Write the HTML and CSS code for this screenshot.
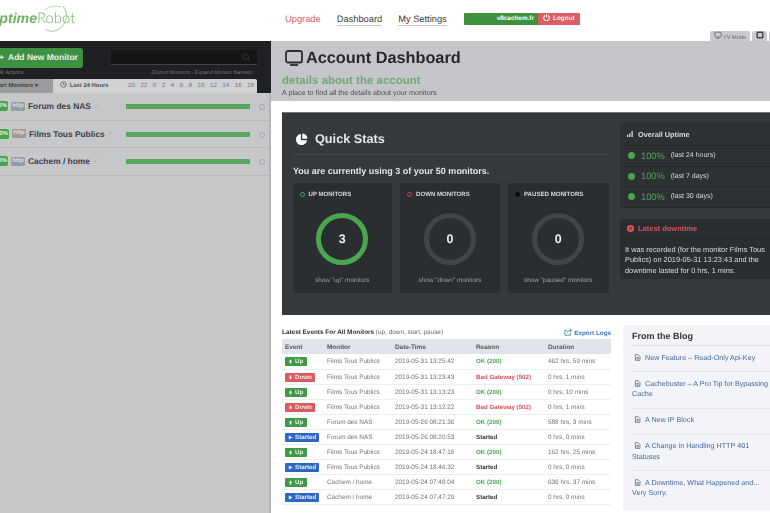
FILE: index.html
```html
<!DOCTYPE html>
<html lang="en">
<head>
<meta charset="utf-8">
<title>Account Dashboard</title>
<link rel="stylesheet" href="styles.css">
</head>
<body>
<svg class="sprite" width="0" height="0"><symbol id="doc" viewBox="0 0 10 10"><path d="M2 1 H6 L8.5 3.5 V9 H2 Z M3.5 5 H7 M3.5 7 H7" fill="none" stroke="#555" stroke-width="1"/></symbol></svg>
<div class="page">
  <header class="top">
    <div class="logo">
      <span class="logo-bold">Uptime</span><span class="logo-thin">Robot</span>
      <svg class="logo-orbit" width="30" height="30" viewBox="0 0 30 30"><path d="M23 2 C29 9 27 20 19 25 C14 28 9 28 5 25" fill="none" stroke="#7dbb72" stroke-width="0.8"/><path d="M5 6 C9 2 15 1 21 3" fill="none" stroke="#9ccb94" stroke-width="0.7"/></svg>
    </div>
    <nav class="nav">
      <a class="nav-upgrade">Upgrade</a>
      <a class="nav-link">Dashboard</a>
      <a class="nav-link">My Settings</a>
    </nav>
    <div class="userbox">
      <span class="user-name">v8cachem.fr</span>
      <span class="user-logout">
        <svg width="7" height="7" viewBox="0 0 10 10"><path d="M3 2.2 A4 4 0 1 0 7 2.2 M5 0.5 V5" fill="none" stroke="#fff" stroke-width="1.5"/></svg>
        Logout
      </span>
    </div>
    <div class="tabs-top">
      <span class="tv-tab">
        <svg width="8" height="8" viewBox="0 0 10 10"><rect x="1" y="1.5" width="8" height="6" rx="1" fill="none" stroke="#666" stroke-width="1"/><path d="M3 9 H7" stroke="#666"/></svg>
        TV Mode
      </span>
      <span class="tv-tab tv-icon"><svg width="8" height="8" viewBox="0 0 10 10"><rect x="1.5" y="1.5" width="7" height="7" rx="1" fill="none" stroke="#444" stroke-width="1.8"/></svg></span>
      <span class="tv-tab tv-icon"></span>
    </div>
  </header>

  <div class="columns">
    <aside class="side">
      <div class="side-dark">
        <div class="side-actions">
          <div class="side-left">
            <a class="add-btn"><span class="add-plus">+</span> Add New Monitor</a>
            <span class="bulk">Bulk Actions</span>
          </div>
          <div class="side-right">
            <div class="search">
              <svg width="9" height="9" viewBox="0 0 10 10"><circle cx="4.2" cy="4.2" r="3" fill="none" stroke="#333" stroke-width="1.2"/><path d="M6.5 6.5 L9.3 9.3" stroke="#333" stroke-width="1.2"/></svg>
            </div>
            <span class="export">(Export Monitors - Expand Monitor Names)</span>
          </div>
        </div>
        <div class="side-tabs">
          <span class="sort">Sort Monitors &#9662;</span>
          <span class="last24">
            <svg width="7" height="7" viewBox="0 0 10 10"><circle cx="5" cy="5" r="4" fill="none" stroke="#555" stroke-width="1.1"/><path d="M5 2.5 V5 H7" fill="none" stroke="#555" stroke-width="1"/></svg>
            Last 24 Hours
          </span>
          <span class="hours"><i>20</i><i>22</i><i>0</i><i>2</i><i>4</i><i>6</i><i>8</i><i>10</i><i>12</i><i>14</i><i>16</i><i>18</i></span>
        </div>
      </div>
      <div class="mon-row">
        <span class="pct">100%</span><span class="http">http</span><span class="mon-name">Forum des NAS</span><span class="check">&#10003;</span>
        <span class="bar"></span><span class="dot"></span>
      </div>
      <div class="mon-row mon-shift">
        <span class="pct">100%</span><span class="http">http</span><span class="mon-name">Films Tous Publics</span><span class="check">&#10003;</span>
        <span class="bar"></span><span class="dot"></span>
      </div>
      <div class="mon-row">
        <span class="pct">100%</span><span class="http">http</span><span class="mon-name">Cachem / home</span><span class="check">&#10003;</span>
        <span class="bar"></span><span class="dot"></span>
      </div>
    </aside>

    <main class="main">
      <section class="head">
        <h1 class="title">
          <svg width="18" height="18" viewBox="0 0 18 18"><rect x="1" y="2" width="16" height="11.5" rx="2" fill="none" stroke="#2b2d30" stroke-width="1.8"/><path d="M5 16 H13" stroke="#2b2d30" stroke-width="1.8"/></svg>
          Account Dashboard
        </h1>
        <p class="sub">details about the account</p>
        <p class="desc">A place to find all the details about your monitors</p>
      </section>

      <section class="stats">
        <div class="stats-left">
          <h2 class="stats-title">
            <svg width="13" height="13" viewBox="0 0 14 14"><path d="M6.3 1 A6 6 0 1 0 13 7.7 H6.3 Z" fill="#fff"/><path d="M7.8 0.6 A6 6 0 0 1 13.4 6.2 H7.8 Z" fill="#fff"/></svg>
            Quick Stats
          </h2>
          <p class="using">You are currently using 3 of your 50 monitors.</p>
          <div class="boxes">
            <div class="box">
              <div class="box-head"><span class="ind ind-up"></span>UP MONITORS</div>
              <div class="ring ring-up">3</div>
              <div class="box-foot">show "up" monitors</div>
            </div>
            <div class="box">
              <div class="box-head"><span class="ind ind-down"></span>DOWN MONITORS</div>
              <div class="ring">0</div>
              <div class="box-foot">show "down" monitors</div>
            </div>
            <div class="box">
              <div class="box-head"><span class="ind ind-paused"></span>PAUSED MONITORS</div>
              <div class="ring">0</div>
              <div class="box-foot">show "paused" monitors</div>
            </div>
          </div>
        </div>
        <div class="stats-right">
          <div class="uptime">
            <div class="up-head">
              <svg width="6" height="6" viewBox="0 0 8 8"><path d="M0 5h1.6v3H0zM3 3h1.6v5H3zM6 0h1.6v8H6z" fill="#e8e8e8"/></svg>
              Overall Uptime
            </div>
            <div class="up-row"><span class="up-dot"></span><span class="up-val">100%</span><span class="up-lab">(last 24 hours)</span></div>
            <div class="up-row"><span class="up-dot"></span><span class="up-val">100%</span><span class="up-lab">(last 7 days)</span></div>
            <div class="up-row"><span class="up-dot"></span><span class="up-val">100%</span><span class="up-lab">(last 30 days)</span></div>
          </div>
          <div class="latest">
            <div class="latest-head">
              <svg width="7" height="7" viewBox="0 0 10 10"><circle cx="5" cy="5" r="5" fill="#d9595f"/><path d="M3 3 L7 7 M7 3 L3 7" stroke="#2b2e31" stroke-width="1.4"/></svg>
              Latest downtime
            </div>
            <p class="latest-text">It was recorded (for the monitor Films Tous Publics) on 2019-05-31 13:23:43 and the downtime lasted for 0 hrs, 1 mins.</p>
          </div>
        </div>
      </section>

      <section class="lower">
        <div class="events">
          <div class="events-top">
            <span class="events-title"><b>Latest Events For All Monitors</b> (up, down, start, pause)</span>
            <a class="export-logs">
              <svg width="8" height="8" viewBox="0 0 10 10"><path d="M8 6 V9 H1 V3 H4 M4 6 C4 4 6 3 9 3 M7 1 L9.3 3 L7 5" fill="none" stroke="#3a78b8" stroke-width="1"/></svg>
              Export Logs
            </a>
          </div>
          <table class="log">
            <thead><tr><th class="c1">Event</th><th class="c2">Monitor</th><th class="c3">Date-Time</th><th class="c4">Reason</th><th>Duration</th></tr></thead>
            <tbody>
              <tr><td><span class="tag tag-up"><svg class="arr"><use href="#a-up"/></svg>Up</span></td><td>Films Tous Publics</td><td>2019-05-31 13:25:42</td><td class="ok">OK (200)</td><td>462 hrs, 59 mins</td></tr>
              <tr><td><span class="tag tag-down"><svg class="arr"><use href="#a-down"/></svg>Down</span></td><td>Films Tous Publics</td><td>2019-05-31 13:23:43</td><td class="bad">Bad Gateway (502)</td><td>0 hrs, 1 mins</td></tr>
              <tr><td><span class="tag tag-up"><svg class="arr"><use href="#a-up"/></svg>Up</span></td><td>Films Tous Publics</td><td>2019-05-31 13:13:23</td><td class="ok">OK (200)</td><td>0 hrs, 10 mins</td></tr>
              <tr><td><span class="tag tag-down"><svg class="arr"><use href="#a-down"/></svg>Down</span></td><td>Films Tous Publics</td><td>2019-05-31 13:12:22</td><td class="bad">Bad Gateway (502)</td><td>0 hrs, 1 mins</td></tr>
              <tr><td><span class="tag tag-up"><svg class="arr"><use href="#a-up"/></svg>Up</span></td><td>Forum des NAS</td><td>2019-05-26 08:21:36</td><td class="ok">OK (200)</td><td>588 hrs, 3 mins</td></tr>
              <tr><td><span class="tag tag-start"><svg class="arr"><use href="#a-play"/></svg>Started</span></td><td>Forum des NAS</td><td>2019-05-26 08:20:53</td><td class="st">Started</td><td>0 hrs, 0 mins</td></tr>
              <tr><td><span class="tag tag-up"><svg class="arr"><use href="#a-up"/></svg>Up</span></td><td>Films Tous Publics</td><td>2019-05-24 18:47:16</td><td class="ok">OK (200)</td><td>162 hrs, 25 mins</td></tr>
              <tr><td><span class="tag tag-start"><svg class="arr"><use href="#a-play"/></svg>Started</span></td><td>Films Tous Publics</td><td>2019-05-24 18:46:32</td><td class="st">Started</td><td>0 hrs, 0 mins</td></tr>
              <tr><td><span class="tag tag-up"><svg class="arr"><use href="#a-up"/></svg>Up</span></td><td>Cachem / home</td><td>2019-05-24 07:48:04</td><td class="ok">OK (200)</td><td>636 hrs, 37 mins</td></tr>
              <tr><td><span class="tag tag-start"><svg class="arr"><use href="#a-play"/></svg>Started</span></td><td>Cachem / home</td><td>2019-05-24 07:47:29</td><td class="st">Started</td><td>0 hrs, 0 mins</td></tr>
            </tbody>
          </table>
          <svg class="sprite" width="0" height="0">
            <symbol id="a-up" viewBox="0 0 6 6"><path d="M3 0.5 L5.2 3 H4 V5.5 H2 V3 H0.8 Z" fill="#e8f0e8"/></symbol>
            <symbol id="a-down" viewBox="0 0 6 6"><path d="M3 5.5 L5.2 3 H4 V0.5 H2 V3 H0.8 Z" fill="#f5e4e4"/></symbol>
            <symbol id="a-play" viewBox="0 0 6 6"><path d="M1 0.5 L5.5 3 L1 5.5 Z" fill="#e8eefa"/></symbol>
          </svg>
        </div>
        <div class="blog">
          <h3 class="blog-title">From the Blog</h3>
          <a class="post"><svg class="doc"><use href="#doc"/></svg>New Feature – Read-Only Api-Key</a>
          <a class="post"><svg class="doc"><use href="#doc"/></svg>Cachebuster – A Pro Tip for Bypassing Cache</a>
          <a class="post"><svg class="doc"><use href="#doc"/></svg>A New IP Block</a>
          <a class="post"><svg class="doc"><use href="#doc"/></svg>A Change in Handling HTTP 401 Statuses</a>
          <a class="post"><svg class="doc"><use href="#doc"/></svg>A Downtime, What Happened and... Very Sorry.</a>
        </div>
      </section>
    </main>
  </div>
</div>
</body>
</html>
```
FILE: styles.css
```css
html, body { margin: 0; padding: 0; background: #fff; }
body { font-family: "Liberation Sans", Arial, sans-serif; width: 770px; height: 513px; overflow: hidden; text-rendering: geometricPrecision; }
p, h1, h2, h3 { margin: 0; }
.sprite { position: absolute; }
.page { width: 770px; height: 513px; overflow: hidden; filter: blur(0.5px); }

.top { position: relative; height: 41px; display: flex; align-items: flex-start; background: #fff; }
.logo { position: relative; width: 296px; margin-left: -11px; padding-top: 6px; line-height: 24px; color: #6fb363; flex: none; box-sizing: border-box; white-space: nowrap; }
.logo-bold { font-weight: 700; font-style: italic; font-size: 14.2px; }
.logo-thin { font-family: Lato, sans-serif; font-weight: 300; font-size: 14.8px; }
.logo-orbit { position: absolute; left: 51px; top: 4px; }
.nav { display: flex; gap: 16px; padding-top: 13px; font-size: 9.3px; line-height: 13px; width: 179px; flex: none; white-space: nowrap; }
.nav-upgrade { color: #d9606a; }
.nav-link { color: #3a3d42; border-bottom: 1px solid #c8c8c8; height: 12px; }
.userbox { margin-top: 13px; width: 116px; height: 12px; display: flex; font-size: 6.4px; line-height: 12px; font-weight: 700; color: #fff; border-radius: 1px; overflow: hidden; }
.user-name { background: #3f9142; width: 74px; box-sizing: border-box; text-align: right; padding-right: 4px; }
.user-logout { background: #da5e63; flex: 1; text-align: center; }
.user-logout svg { vertical-align: -1px; margin-right: 1px; }
.tabs-top { position: absolute; right: -14px; top: 31px; display: flex; gap: 2px; }
.tv-tab { height: 10px; padding: 0 2px; background: #c9cacc; border-radius: 2px 2px 0 0; font-size: 5.6px; line-height: 10px; color: #666; width: 36px; text-align: center; white-space: nowrap; }
.tv-icon { width: 11px; }

.columns { display: flex; height: 472px; }

.side { width: 271px; flex: none; height: 100%; background: #c6c7c9; box-shadow: inset -2px 0 0 #b5b6b8; overflow: hidden; }
.side-dark { background: #1e2023; height: 52px; display: flex; flex-direction: column; justify-content: space-between; }
.side-actions { display: flex; justify-content: space-between; padding: 7px 14px 0 0; }
.side-left { margin-left: -6px; }
.add-btn { display: block; width: 89px; height: 20px; background: #3f9142; border-radius: 3px; color: #e8f0e8; font-size: 8.5px; font-weight: 700; line-height: 19px; padding-left: 5px; box-sizing: border-box; white-space: nowrap; }
.add-plus { margin-right: 2px; }
.bulk { display: block; font-size: 5.6px; line-height: 9px; color: #777; margin-top: 1px; text-indent: -1px; white-space: nowrap; }
.side-right { display: flex; flex-direction: column; align-items: flex-end; }
.search { width: 146px; height: 15px; margin-top: 2px; background: #131517; border-bottom: 1px solid #444; display: flex; align-items: center; justify-content: flex-end; padding-right: 6px; box-sizing: border-box; }
.export { font-size: 5.3px; line-height: 9px; color: #777; margin-top: 4px; margin-right: 5px; white-space: nowrap; }
.side-tabs { display: flex; width: 257px; height: 14px; background: #d0d1d3; font-size: 5.9px; line-height: 14px; font-weight: 700; color: #555; border-radius: 0 2px 0 0; }
.sort { width: 53px; background: #9a9b9d; color: #444; flex: none; text-indent: -5px; white-space: nowrap; overflow: hidden; }
.last24 { margin-left: 7px; width: 65px; flex: none; white-space: nowrap; }
.last24 svg { vertical-align: -1px; margin-right: 1px; }
.hours { flex: 1; display: flex; justify-content: space-between; margin-left: 3px; font-weight: 400; color: #777; font-size: 6.2px; padding-right: 3px; }
.hours i { font-style: normal; }

.mon-row { display: flex; align-items: center; height: 27.5px; border-bottom: 1px solid #b9babc; box-sizing: border-box; position: relative; margin-right: 2px; }
.pct { background: #47a34c; color: #e8f0e8; font-size: 6px; font-weight: 700; width: 20px; margin-left: -12px; height: 10px; line-height: 10px; text-align: right; padding-right: 1px; box-sizing: border-box; border-radius: 2px; flex: none; }
.http { background: #9a9b9d; color: #ddd; font-size: 6px; font-weight: 700; width: 14px; height: 9px; line-height: 9px; text-align: center; margin-left: 3px; border-radius: 1px; flex: none; }
.mon-name { font-size: 8.4px; font-weight: 700; color: #3f4145; margin-left: 3px; white-space: nowrap; }
.check { font-size: 6px; color: #aaa; margin-left: 3px; }
.mon-shift .pct { width: 21px; }
.bar { position: absolute; left: 126px; top: 11px; width: 124px; height: 5px; background: #5aa65e; }
.dot { position: absolute; left: 259px; top: 11px; width: 4px; height: 4px; border: 1px solid #a5a6a8; border-radius: 50%; }

.main { flex: 1; min-width: 0; display: flex; flex-direction: column; }
.head { height: 60px; background: #c5c6c9; padding: 5px 0 0 11px; box-sizing: border-box; }
.title { display: flex; align-items: center; gap: 3px; font-size: 16.3px; line-height: 24px; color: #26282c; font-weight: 700; margin-left: 3px; }
.sub { font-size: 11.5px; line-height: 13px; font-weight: 700; color: #72a873; margin-top: 5px; }
.desc { font-size: 7.2px; line-height: 9px; color: #4c4e52; }

.stats { margin: 11px 0 0 11px; height: 203px; background: #35383c; display: flex; box-sizing: border-box; width: 520px; border-top: 1px solid #777; flex: none; }
.stats-left { width: 338px; padding: 0 0 0 10.5px; box-sizing: border-box; flex: none; }
.stats-title { display: flex; align-items: center; gap: 7px; height: 42px; margin-right: 12px; padding-left: 2.5px; padding-top: 11px; box-sizing: border-box; border-bottom: 1px solid #45484c; color: #e6e6e6; font-size: 12.7px; font-weight: 700; }
.using { font-size: 9px; line-height: 12px; font-weight: 700; color: #e4e4e4; margin-top: 10px; margin-left: 0.5px; }
.boxes { display: grid; grid-template-columns: 99.5px 100px 100.5px; gap: 8px; margin-top: 6px; }
.box { height: 110px; background: #2b2e31; display: flex; flex-direction: column; align-items: center; }
.box-head { width: 100%; height: 23px; flex: none; padding-top: 1px; border-bottom: 1px solid #25272a; box-sizing: border-box; font-size: 6.1px; font-weight: 700; color: #d8d8d8; padding-left: 7px; white-space: nowrap; display: flex; align-items: center; gap: 4px; }
.ind { width: 3px; height: 3px; border-radius: 50%; border: 1px solid; flex: none; }
.ind-up { border-color: #4aa84e; }
.ind-down { border-color: #c9464c; }
.ind-paused { border-color: #0c0c0c; background: #0c0c0c; }
.ring { width: 52px; height: 52px; box-sizing: border-box; margin-top: 7px; border: 5px solid #424548; border-radius: 50%; display: flex; align-items: center; justify-content: center; color: #eee; font-size: 12.5px; font-weight: 700; }
.ring-up { border-color: #4aa64e; }
.box-foot { font-size: 6.4px; color: #9c9e9f; margin-top: 11px; line-height: 9px; }

.stats-right { flex: 1; padding-top: 10px; min-width: 0; box-sizing: border-box; }
.uptime { background: #2e3134; }
.up-head { height: 23px; display: flex; align-items: center; gap: 5px; padding-left: 7px; border-bottom: 1px solid #26282b; box-sizing: border-box; font-size: 7.3px; font-weight: 700; color: #dcdcdc; }
.up-row { height: 20.5px; display: flex; align-items: center; border-bottom: 1px solid #26282b; box-sizing: border-box; padding-left: 8px; }
.up-dot { width: 7px; height: 7px; border-radius: 50%; background: #4aa64e; flex: none; }
.up-val { color: #4aa64e; font-size: 9.3px; margin-left: 6px; }
.up-lab { color: #d8d8d8; font-size: 7px; margin-left: 6px; }
.latest { background: #2b2e31; margin-top: 11px; }
.latest-head { height: 21px; display: flex; align-items: center; gap: 4px; padding-left: 7px; font-size: 7.5px; font-weight: 700; color: #d3545b; border-bottom: 1px solid #25272a; box-sizing: border-box; }
.latest-text { font-size: 7.4px; line-height: 10.5px; color: #dadada; padding: 5px 0 3px 5px; width: 146px; }

.lower { display: flex; margin: 10px 0 0 11px; flex: 1; min-height: 0; }
.events { width: 329px; flex: none; }
.events-top { display: flex; justify-content: space-between; align-items: center; height: 14px; font-size: 6.4px; color: #666; }
.events-title b { color: #333; }
.export-logs { color: #3a78b8; font-weight: 700; font-size: 6.3px; }
.export-logs svg { vertical-align: -1px; margin-right: 1px; }
.log { width: 329px; border-collapse: collapse; table-layout: fixed; font-size: 6.4px; color: #70737a; white-space: nowrap; }
.log th { background: #e1e3ea; height: 15px; padding: 1px 0 0 3px; box-sizing: border-box; text-align: left; font-weight: 700; color: #555; font-size: 6.4px; }
.log td { height: 15.1px; padding: 1px 0 0 3px; border-bottom: 1px solid #eceef2; box-sizing: border-box; }
.c1 { width: 42px; }
.c2 { width: 68px; }
.c3 { width: 81px; }
.c4 { width: 72px; }
.tag { display: inline-flex; align-items: center; gap: 2px; height: 9px; border-radius: 1px; padding: 0 3px; box-sizing: content-box; color: #e8f0e8; font-weight: 700; font-size: 6.2px; vertical-align: middle; white-space: nowrap; }
.arr { width: 5px; height: 5px; flex: none; }
.tag-up { background: #3f9a48; width: 16px; }
.tag-down { background: #d9595f; width: 24px; }
.tag-start { background: #2f68c4; width: 28px; }
.ok { color: #4aa64e; font-weight: 700; font-size: 6.2px; }
.bad { color: #d3545b; font-weight: 700; font-size: 6.2px; }
.st { color: #333; font-weight: 700; font-size: 6.2px; }

.blog { margin-left: 12px; width: 160px; height: 185px; background: #f3f4f8; padding: 0 0 0 9px; box-sizing: border-box; flex: none; }
.blog-title { font-size: 9px; line-height: 12px; color: #333; height: 21px; padding-top: 5px; box-sizing: border-box; border-bottom: 1px solid #e0e1e5; font-weight: 700; }
.post { display: block; color: #44689c; font-size: 7.2px; line-height: 10.5px; padding: 6.5px 0 8px 0; border-bottom: 1px solid #e5e6ea; box-sizing: border-box; width: 139px; }
.post:last-child { border-bottom: 0; }
.doc { width: 7px; height: 7px; vertical-align: -1px; margin: 0 4px 0 2px; }
```
